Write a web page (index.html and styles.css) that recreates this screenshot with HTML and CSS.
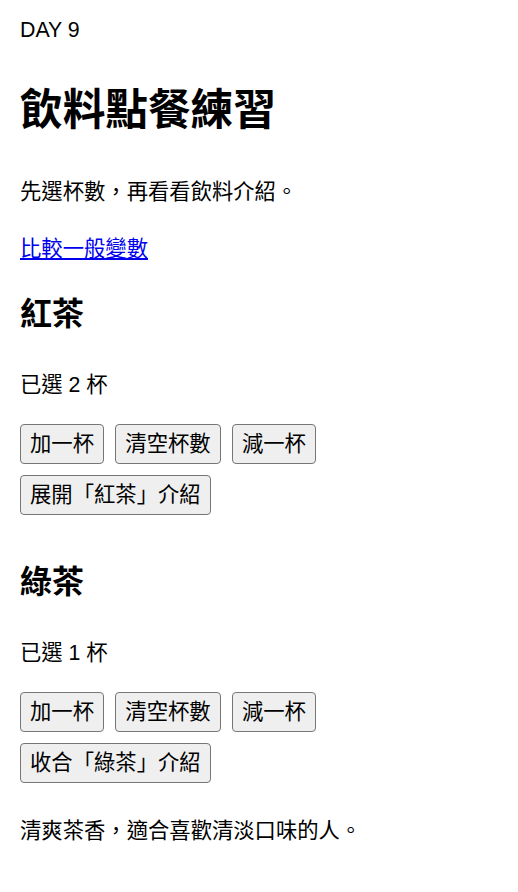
FILE: index.html
```html
<!DOCTYPE html>
<html lang="zh-Hant">
<head>
<meta charset="utf-8">
<title>飲料點餐練習</title>
<link rel="stylesheet" href="styles.css">
</head>
<body>
<main class="page">
  <p class="eyebrow">DAY 9</p>
  <h1 class="title">飲料點餐練習</h1>
  <p class="intro">先選杯數，再看看飲料介紹。</p>
  <p class="link-row"><a href="#" class="compare-link">比較一般變數</a></p>

  <section class="drink">
    <h2 class="drink-name">紅茶</h2>
    <p class="count">已選 2 杯</p>
    <div class="buttons">
      <button class="btn" type="button">加一杯</button>
      <button class="btn" type="button">清空杯數</button>
      <button class="btn" type="button">減一杯</button>
      <button class="btn" type="button">展開「紅茶」介紹</button>
    </div>
  </section>

  <section class="drink">
    <h2 class="drink-name">綠茶</h2>
    <p class="count">已選 1 杯</p>
    <div class="buttons">
      <button class="btn" type="button">加一杯</button>
      <button class="btn" type="button">清空杯數</button>
      <button class="btn" type="button">減一杯</button>
      <button class="btn" type="button">收合「綠茶」介紹</button>
    </div>
    <p class="desc">清爽茶香，適合喜歡清淡口味的人。</p>
  </section>
</main>
</body>
</html>
```

FILE: styles.css
```css
html, body {
  margin: 0;
  padding: 0;
  background: #ffffff;
}

body {
  font-family: "Liberation Sans", "Noto Sans CJK TC", sans-serif;
  font-size: 21.33px;
  color: #000000;
}

.page {
  padding: 12.8px 20px 0;
}

.eyebrow {
  margin: 0;
  line-height: 35px;
}

.title {
  margin: 28.7px 0 28.6px;
  font-size: 42.67px;
  font-weight: bold;
  line-height: 69px;
}

.intro {
  margin: 0 0 21.6px;
  line-height: 35px;
  padding-top: 1px;
}

.link-row {
  margin: 0;
  line-height: 35px;
}

.compare-link {
  color: #0000ee;
  text-decoration: underline;
}

.drink {
  margin: 0;
  padding-bottom: 19.2px;
}

.drink-name {
  margin: 21.4px 0 27.1px;
  font-size: 32px;
  font-weight: bold;
  line-height: 52.2px;
}

.count {
  margin: 0 0 20.8px;
  padding-top: 1px;
  line-height: 35px;
}

.buttons {
  display: flex;
  flex-wrap: wrap;
  column-gap: 11.3px;
  row-gap: 11px;
}

.btn {
  font-family: "Liberation Sans", "Noto Sans CJK TC", sans-serif;
  font-size: 21.33px;
  line-height: 26px;
  padding: 6px 9px;
  margin: 0;
  color: #000000;
  background: #efefef;
  border: 1px solid #767676;
  border-radius: 4px;
}

.desc {
  margin: 31px 0 0;
  line-height: 35px;
}
```
